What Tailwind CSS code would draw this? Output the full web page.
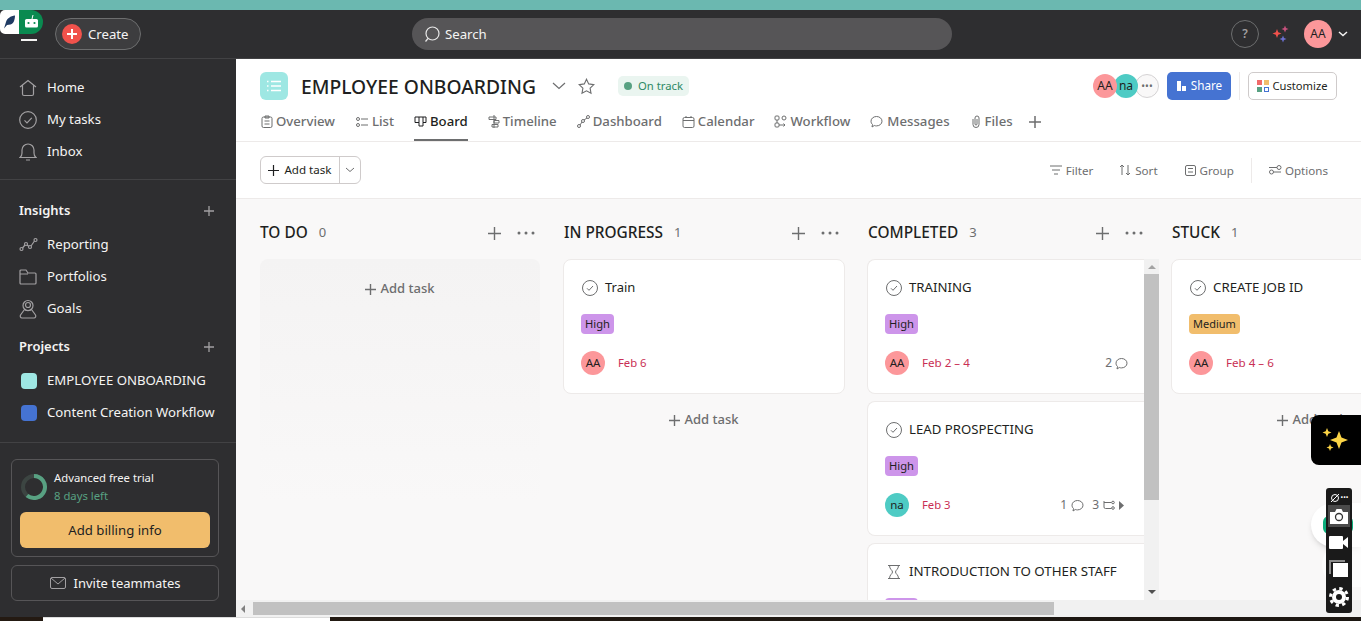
<!DOCTYPE html>
<html lang="en">
  <head>
    <meta charset="UTF-8" />
    <meta name="viewport" content="width=device-width, initial-scale=1.0" />
    <title>EMPLOYEE ONBOARDING - Board</title>
    <script src="https://cdn.jsdelivr.net/npm/@tailwindcss/browser@4"></script>
  </head>
  <body class="h-screen overflow-hidden bg-[#2e2e30] font-['Noto_Sans',sans-serif] text-[13px] text-[#1e1f21]">
    <div class="relative flex h-[621px] w-[1361px] flex-col overflow-hidden">
      <!-- Browser strip -->
      <div class="h-[10px] shrink-0 bg-[#6bb8b0]"></div>

      <!-- Top bar -->
      <header class="flex h-[49px] shrink-0 items-center border-b border-[#424244] bg-[#2e2e30] pl-[21px] pr-[12px]">
        <div class="mb-[17px] h-[2px] w-[16px] self-end bg-[#f5f4f3]"></div>
        <button class="ml-[18px] flex h-[32px] w-[86px] items-center gap-[6px] rounded-full border border-[#6d6e6f] bg-[#3d3d3f] pl-[6px] text-[13.2px] text-[#f5f4f3]">
          <span class="flex h-[20px] w-[20px] items-center justify-center rounded-full bg-[#f1524c]">
            <svg width="12" height="12" viewBox="0 0 12 12"><path d="M6 1v10M1 6h10" stroke="#fff" stroke-width="2" /></svg>
          </span>
          <span class="mt-[2px]">Create</span>
        </button>
        <div class="ml-[271px] flex h-[32px] w-[540px] items-center gap-[4px] rounded-full bg-[#565557] pl-[11px] text-[13.2px] text-[#f5f4f3]">
          <svg width="18" height="18" viewBox="0 0 18 18" fill="none" stroke="#e8e8e8" stroke-width="1.2"><circle cx="9.500" cy="8.500" r="6.500" /><path d="M5 13.500l-2.500 3" /></svg>
          <span class="mt-[2px]">Search</span>
        </div>
        <div class="ml-auto flex items-center">
          <span class="flex h-[28px] w-[28px] items-center justify-center rounded-full border border-[#6d6e6f] text-[12px] font-semibold text-[#a2a0a2]">?</span>
          <svg class="ml-[13px]" width="18" height="18" viewBox="0 0 18 18"><path d="M5 4l1.200 3.300 3.300 1.200-3.300 1.200L5 13 3.800 9.700.5 8.500l3.300-1.200z" fill="#f1524c" /><path d="M13 .5l1 2.500 2.500 1-2.500 1-1 2.500-1-2.500-2.500-1 2.500-1z" fill="#c9527e" /><path d="M11 10.500l1 2.500 2.500 1-2.500 1-1 2.500-1-2.500-2.500-1 2.500-1z" fill="#6a6fd0" /></svg>
          <span class="ml-[14px] flex h-[28px] w-[28px] items-center justify-center rounded-full bg-[#fc979a] text-[12px]">AA</span>
          <svg class="ml-[5px]" width="12" height="8" viewBox="0 0 12 8" fill="none" stroke="#f5f4f3" stroke-width="1.500"><path d="M2 2l4 3.500L10 2" /></svg>
        </div>
      </header>

      <div class="flex min-h-0 flex-1">
        <!-- Sidebar -->
        <aside class="flex w-[236px] shrink-0 flex-col bg-[#2e2e30] text-[13.2px] text-[#f5f4f3]">
          <nav class="flex h-[121px] shrink-0 flex-col border-b border-[#424244] px-[19px] pt-[13px]">
            <a class="flex h-[32px] shrink-0 items-center gap-[10px]">
              <svg class="shrink-0" width="18" height="18" viewBox="0 0 18 18" fill="none" stroke="#a2a0a2" stroke-width="1.200"><path d="M1 8l8-6.500L17 8M3.500 6.500V15a1.500 1.500 0 0 0 1.500 1.500h8a1.500 1.500 0 0 0 1.500-1.500V6.500" /></svg>
              Home
            </a>
            <a class="flex h-[32px] shrink-0 items-center gap-[10px]">
              <svg class="shrink-0" width="18" height="18" viewBox="0 0 18 18" fill="none" stroke="#a2a0a2" stroke-width="1.200"><circle cx="9" cy="9" r="8.300" /><path d="M5.500 9.300l2.500 2.500 4.800-5" /></svg>
              My tasks
            </a>
            <a class="flex h-[32px] shrink-0 items-center gap-[10px]">
              <svg class="shrink-0" width="18" height="18" viewBox="0 0 18 18" fill="none" stroke="#a2a0a2" stroke-width="1.200"><path d="M1 14.500h16c-1.500-1-2-2.500-2-4.500V7A6 6 0 0 0 3 7v3c0 2-.5 3.500-2 4.500zM7 17h4" /></svg>
              Inbox
            </a>
          </nav>

          <div class="flex h-[154px] shrink-0 flex-col px-[19px] pt-[19px]">
            <div class="flex h-[24px] shrink-0 items-center justify-between text-[13px] font-semibold">
              Insights
              <svg width="12" height="12" viewBox="0 0 12 12" class="mr-[2px]"><path d="M6 1v10M1 6h10" stroke="#a2a0a2" stroke-width="1.300" /></svg>
            </div>
            <a class="mt-[6px] flex h-[32px] shrink-0 items-center gap-[9px]">
              <svg class="shrink-0" width="19" height="18" viewBox="0 0 19 18" fill="none" stroke="#a2a0a2" stroke-width="1.200"><circle cx="2.500" cy="13" r="1.500" /><circle cx="7" cy="8" r="1.500" /><circle cx="11" cy="11" r="1.500" /><circle cx="16.500" cy="4" r="1.500" /><path d="M3.500 12l2.500-3M8 9l2 1.500M12 10l3.500-5" /></svg>
              Reporting
            </a>
            <a class="flex h-[32px] shrink-0 items-center gap-[10px]">
              <svg class="shrink-0" width="18" height="16" viewBox="0 0 18 16" fill="none" stroke="#a2a0a2" stroke-width="1.200"><path d="M1 14V2a1 1 0 0 1 1-1h5l2 3h7a1 1 0 0 1 1 1v9a1 1 0 0 1-1 1H2a1 1 0 0 1-1-1zM1 5h8" /></svg>
              Portfolios
            </a>
            <a class="flex h-[32px] shrink-0 items-center gap-[10px]">
              <svg class="shrink-0" width="18" height="20" viewBox="0 0 18 20" fill="none" stroke="#a2a0a2" stroke-width="1.200"><circle cx="9" cy="6.500" r="5" /><circle cx="9" cy="6" r="2.500" /><path d="M5.500 10.500L1.500 16a2 2 0 0 0 1.500 3h12a2 2 0 0 0 1.500-3l-4-5.500c-1 1.500-6 1.500-7 0z" /></svg>
              Goals
            </a>
          </div>

          <div class="flex h-[109px] shrink-0 flex-col border-b border-[#424244] px-[19px] pt-[1px]">
            <div class="flex h-[24px] shrink-0 items-center justify-between text-[13px] font-semibold">
              Projects
              <svg width="12" height="12" viewBox="0 0 12 12" class="mr-[2px]"><path d="M6 1v10M1 6h10" stroke="#a2a0a2" stroke-width="1.300" /></svg>
            </div>
            <a class="mt-[6px] flex h-[32px] shrink-0 items-center gap-[10px] whitespace-nowrap">
              <span class="ml-[2px] h-[16px] w-[16px] shrink-0 rounded-[4px] bg-[#9ee7e3]"></span>
              EMPLOYEE ONBOARDING
            </a>
            <a class="flex h-[32px] shrink-0 items-center gap-[10px] whitespace-nowrap">
              <span class="ml-[2px] h-[16px] w-[16px] shrink-0 rounded-[4px] bg-[#4573d2]"></span>
              Content Creation Workflow
            </a>
          </div>

          <div class="flex flex-col gap-[8px] pl-[11px] pr-[17px] pt-[16px]">
            <div class="flex h-[98px] shrink-0 flex-col rounded-[6px] border border-[#565557] px-[8px] pt-[9px]">
              <div class="flex items-center gap-[6px]">
                <svg width="28" height="28" viewBox="0 0 28 28" fill="none" stroke-width="4"><circle cx="14" cy="14" r="11" stroke="#3c4542" /><path d="M14 3a11 11 0 1 1-7 19.500" stroke="#58a182" /></svg>
                <div class="flex flex-col text-[11.3px] leading-[18px]">
                  <span class="text-[#f5f4f3]">Advanced free trial</span>
                  <span class="text-[#58a182]">8 days left</span>
                </div>
              </div>
              <button class="mt-[7px] h-[36px] shrink-0 rounded-[6px] bg-[#f1bd6c] pt-[2px] text-[13.2px] text-[#1e1f21]">Add billing info</button>
            </div>
            <button class="flex h-[36px] shrink-0 items-center justify-center gap-[8px] rounded-[6px] border border-[#565557] text-[13px] text-[#f5f4f3]">
              <svg width="16" height="12" viewBox="0 0 16 12" fill="none" stroke="#a2a0a2" stroke-width="1"><rect x="0.500" y="0.500" width="15" height="11" rx="1.500" /><path d="M1 1l7 6 7-6" /></svg>
              <span class="mt-[2px]">Invite teammates</span>
            </button>
          </div>
        </aside>

        <!-- Main -->
        <main class="flex min-w-0 flex-1 flex-col bg-white">
          <!-- Project header -->
          <div class="flex h-[46px] shrink-0 items-center pl-[24px] pr-[24px] pt-[8px]">
            <span class="flex h-[28px] w-[28px] items-center justify-center rounded-[6px] bg-[#9ee7e3]">
              <svg width="16" height="12" viewBox="0 0 16 12" stroke="#fff" stroke-width="1.600"><path d="M5 1.500h10M5 6h10M5 10.500h10M1 1.500h1.500M1 6h1.500M1 10.500h1.500" /></svg>
            </span>
            <h1 class="ml-[13px] mt-[2px] whitespace-nowrap text-[19.3px] font-medium">EMPLOYEE ONBOARDING</h1>
            <svg class="ml-[16px]" width="14" height="8" viewBox="0 0 14 8" fill="none" stroke="#6d6e6f" stroke-width="1.200"><path d="M1 1l6 5.500L13 1" /></svg>
            <svg class="ml-[12px]" width="17" height="17" viewBox="0 0 17 17" fill="none" stroke="#6d6e6f" stroke-width="1.100"><path d="M8.500 1.200l2.200 4.700 5.100.7-3.700 3.600.9 5.100-4.500-2.500L4 15.300l.9-5.100L1.200 6.600l5.100-.7z" /></svg>
            <span class="ml-[23px] flex h-[20px] items-center gap-[6px] rounded-[5px] bg-[#eaf5f0] px-[6px] text-[11.3px] text-[#2f8a66]">
              <span class="h-[8px] w-[8px] rounded-full bg-[#58a182]"></span>
              On track
            </span>
            <div class="ml-auto flex items-center">
              <span class="z-20 flex h-[24px] w-[24px] items-center justify-center rounded-full bg-[#fc979a] text-[12px]">AA</span>
              <span class="z-10 -ml-[3px] flex h-[24px] w-[24px] items-center justify-center rounded-full bg-[#4ecbc4] text-[12px]">na</span>
              <span class="-ml-[3px] flex h-[24px] w-[24px] items-center justify-center rounded-full border border-[#d5d3d4] bg-[#f9f8f8] text-[10px] leading-none text-[#6d6e6f]">•••</span>
              <button class="ml-[8px] flex h-[28px] w-[64px] items-center justify-center gap-[4px] rounded-[5px] bg-[#4573d2] text-[11.7px] text-white">
                <svg width="11" height="11" viewBox="0 0 11 11" fill="#fff"><path d="M1 0h4v10H1zM6 5h4v5H6z" /></svg>
                Share
              </button>
              <span class="ml-[8px] h-[28px] w-[1px] bg-[#edeae9]"></span>
              <button class="ml-[8px] flex h-[28px] w-[89px] items-center justify-center gap-[3px] rounded-[5px] border border-[#cfcbcb] text-[11.2px]">
                <svg width="12" height="12" viewBox="0 0 12 12"><rect width="5" height="5" fill="#f06a6a" /><rect x="7" width="5" height="5" fill="#f1bd6c" /><rect y="7" width="5" height="5" fill="#58a182" /><rect x="7.500" y="7.500" width="4" height="4" fill="none" stroke="#4573d2" /></svg>
                Customize
              </button>
            </div>
          </div>

          <!-- Tabs -->
          <nav class="flex h-[37px] shrink-0 items-stretch gap-[20px] border-b border-[#edeae9] pb-[3px] pl-[25px] text-[13.2px] font-medium text-[#6d6e6f]">
            <a class="flex items-center gap-[3px]">
              <svg width="12" height="13" viewBox="0 0 12 13" fill="none" stroke="#6d6e6f"><rect x="1" y="2" width="10" height="10.500" rx="1.500" /><path d="M4 1h4v2H4zM3.500 6h5M3.500 9h5" /></svg>
              Overview
            </a>
            <a class="ml-[1px] flex items-center gap-[4px]">
              <svg width="12" height="10" viewBox="0 0 12 10" fill="none" stroke="#6d6e6f"><circle cx="2" cy="2" r="1.500" /><circle cx="2" cy="8" r="1.500" /><path d="M5 2h7M5 8h7" /></svg>
              List
            </a>
            <a class="relative flex items-center gap-[3px] text-[#1e1f21]">
              <svg width="13" height="12" viewBox="0 0 13 12" fill="none" stroke="#1e1f21"><path d="M1 1h11v5.500H9V10H5V6.500H1zM5 1v5.500M9 1v5.500" /></svg>
              Board
              <span class="absolute inset-x-0 bottom-[-3px] h-[2px] bg-[#6d6e6f]"></span>
            </a>
            <a class="flex items-center gap-[2px]">
              <svg width="13" height="13" viewBox="0 0 13 13" fill="none" stroke="#6d6e6f"><path d="M6 0v13M1 2h7v2.500H1zM6 5.500h5V8H6zM4 9.500h6V12H4z" /></svg>
              Timeline
            </a>
            <a class="flex items-center gap-[3px]">
              <svg width="13" height="13" viewBox="0 0 13 13" fill="none" stroke="#6d6e6f"><circle cx="2" cy="11" r="1.500" /><circle cx="6" cy="6" r="1.500" /><circle cx="11" cy="2" r="1.500" /><path d="M3 10l2-3M7 5l3-2" /></svg>
              Dashboard
            </a>
            <a class="flex items-center gap-[3px]">
              <svg width="13" height="13" viewBox="0 0 13 13" fill="none" stroke="#6d6e6f"><rect x="1" y="2.500" width="11" height="10" rx="1.500" /><path d="M1 5.500h11M4 1v2M9 1v2" /></svg>
              Calendar
            </a>
            <a class="flex items-center gap-[3px]">
              <svg width="13" height="13" viewBox="0 0 13 13" fill="none" stroke="#6d6e6f"><rect x="1" y="1" width="4" height="4" rx="1" /><circle cx="10" cy="3" r="2" /><rect x="1" y="8" width="4" height="4" rx="1" /><path d="M3 5v3M5 10h6l-1.500-1.500M11 10l-1.500 1.500" /></svg>
              Workflow
            </a>
            <a class="flex items-center gap-[4px]">
              <svg width="13" height="13" viewBox="0 0 13 13" fill="none" stroke="#6d6e6f"><path d="M6.500 1.500c3 0 5.500 2 5.500 4.700s-2.500 4.700-5.500 4.700c-.8 0-1.500-.1-2.200-.4L2 12l.5-2.500C1.500 8.600 1 7.500 1 6.200 1 3.500 3.500 1.500 6.500 1.500z" /></svg>
              Messages
            </a>
            <a class="flex items-center gap-[3px]">
              <svg width="12" height="13" viewBox="0 0 12 13" fill="none" stroke="#6d6e6f"><path d="M3 4v5.500a3 3 0 0 0 6 0V3a2 2 0 0 0-4 0v6a1 1 0 0 0 2 0V4" /></svg>
              Files
            </a>
            <span class="-ml-[5px] flex items-center">
              <svg width="14" height="14" viewBox="0 0 14 14"><path d="M7 1v12M1 7h12" stroke="#6d6e6f" stroke-width="1.500" /></svg>
            </span>
          </nav>

          <!-- Toolbar -->
          <div class="flex h-[57px] shrink-0 items-center border-b border-[#edeae9] pl-[24px] pr-[33px] text-[11.6px] text-[#6d6e6f]">
            <div class="flex h-[28px] items-stretch rounded-[6px] border border-[#cfcbcb] text-[#1e1f21]">
              <button class="flex w-[79px] items-center justify-center gap-[5px] border-r border-[#cfcbcb]">
                <svg width="11" height="11" viewBox="0 0 11 11"><path d="M5.500 0v11M0 5.500h11" stroke="#1e1f21" stroke-width="1.200" /></svg>
                Add task
              </button>
              <button class="flex w-[20px] items-center justify-center">
                <svg width="10" height="6" viewBox="0 0 10 6" fill="none" stroke="#6d6e6f"><path d="M1 1l4 3.500L9 1" /></svg>
              </button>
            </div>
            <div class="ml-auto flex items-center pt-[1px]">
              <span class="flex items-center gap-[4px]">
                <svg width="12" height="10" viewBox="0 0 12 10" stroke="#6d6e6f"><path d="M0 1h12M2 5h8M4 9h4" /></svg>
                Filter
              </span>
              <span class="ml-[26px] flex items-center gap-[4px]">
                <svg width="12" height="12" viewBox="0 0 12 12" fill="none" stroke="#6d6e6f"><path d="M3 11V1L1 3M3 1l2 2M9 1v10l-2-2M9 11l2-2" /></svg>
                Sort
              </span>
              <span class="ml-[27px] flex items-center gap-[4px]">
                <svg width="11" height="11" viewBox="0 0 11 11" fill="none" stroke="#6d6e6f"><rect x="0.500" y="0.500" width="10" height="10" rx="1.500" /><path d="M3 3.500h5M3 7h5" /></svg>
                Group
              </span>
              <span class="ml-[17px] h-[25px] w-[1px] bg-[#edeae9]"></span>
              <span class="ml-[17px] flex items-center gap-[3px]">
                <svg width="13" height="10" viewBox="0 0 13 10" fill="none" stroke="#6d6e6f"><circle cx="2.500" cy="7" r="2" /><circle cx="10" cy="2.500" r="2" /><path d="M4.500 7H12M0 2.500h8" /></svg>
                Options
              </span>
            </div>
          </div>

          <!-- Board -->
          <div class="flex min-h-0 flex-1 gap-[24px] overflow-hidden bg-[#f9f8f8] pl-[24px]">
            <!-- TO DO -->
            <section class="flex w-[280px] shrink-0 flex-col">
              <div class="flex h-[60px] shrink-0 items-center pt-[8px]">
                <h2 class="text-[15.4px] font-medium">TO DO</h2>
                <span class="ml-[11px] text-[13px] text-[#6d6e6f]">0</span>
                <span class="ml-auto flex items-center gap-[16px] pr-[5px]">
                  <svg width="13" height="13" viewBox="0 0 13 13"><path d="M6.500 0v13M0 6.500h13" stroke="#6d6e6f" stroke-width="1.400" /></svg>
                  <svg width="18" height="4" viewBox="0 0 18 4" fill="#6d6e6f"><circle cx="2" cy="2" r="1.500" /><circle cx="9" cy="2" r="1.500" /><circle cx="16" cy="2" r="1.500" /></svg>
                </span>
              </div>
              <div class="flex h-[242px] justify-center rounded-t-[8px] bg-gradient-to-b from-[#f4f3f3] to-[#f9f8f8] pt-[20px] text-[13px] font-medium text-[#6d6e6f]">
                <span class="flex h-[20px] items-center gap-[4px]">
                  <svg width="11" height="11" viewBox="0 0 11 11"><path d="M5.500 0v11M0 5.500h11" stroke="#6d6e6f" stroke-width="1.400" /></svg>
                  Add task
                </span>
              </div>
            </section>

            <!-- IN PROGRESS -->
            <section class="flex w-[280px] shrink-0 flex-col">
              <div class="flex h-[60px] shrink-0 items-center pt-[8px]">
                <h2 class="text-[15.4px] font-medium">IN PROGRESS</h2>
                <span class="ml-[11px] text-[13px] text-[#6d6e6f]">1</span>
                <span class="ml-auto flex items-center gap-[16px] pr-[5px]">
                  <svg width="13" height="13" viewBox="0 0 13 13"><path d="M6.500 0v13M0 6.500h13" stroke="#6d6e6f" stroke-width="1.400" /></svg>
                  <svg width="18" height="4" viewBox="0 0 18 4" fill="#6d6e6f"><circle cx="2" cy="2" r="1.500" /><circle cx="9" cy="2" r="1.500" /><circle cx="16" cy="2" r="1.500" /></svg>
                </span>
              </div>
              <article class="-ml-[1px] flex h-[135px] w-[282px] shrink-0 flex-col rounded-[8px] border border-[#edeae9] bg-white pl-[17px] pr-[16px] pt-[18px]">
                <div class="flex h-[20px] items-center gap-[7px] text-[13px]">
                  <svg class="ml-[1px]" width="16" height="16" viewBox="0 0 16 16" fill="none" stroke="#6d6e6f"><circle cx="8" cy="8" r="7.500" /><path d="M5 8.300l2 2 4-4.300" /></svg>
                  Train
                </div>
                <span class="mt-[16px] flex h-[20px] w-fit items-center rounded-[4px] bg-[#cd95ea] px-[4px] text-[11.2px]">High</span>
                <div class="mt-[17px] flex items-center text-[11.3px] text-[#c92f54]">
                  <span class="flex h-[24px] w-[24px] items-center justify-center rounded-full bg-[#fc979a] text-[11.5px] text-[#1e1f21]">AA</span>
                  <span class="ml-[13px]">Feb 6</span>
                </div>
              </article>
              <div class="mt-[16px] flex h-[20px] items-center justify-center gap-[4px] text-[13px] font-medium text-[#6d6e6f]">
                <svg width="11" height="11" viewBox="0 0 11 11"><path d="M5.500 0v11M0 5.500h11" stroke="#6d6e6f" stroke-width="1.400" /></svg>
                Add task
              </div>
            </section>

            <!-- COMPLETED -->
            <section class="flex w-[280px] shrink-0 flex-col">
              <div class="flex h-[60px] shrink-0 items-center pt-[8px]">
                <h2 class="text-[15.4px] font-medium">COMPLETED</h2>
                <span class="ml-[11px] text-[13px] text-[#6d6e6f]">3</span>
                <span class="ml-auto flex items-center gap-[16px] pr-[5px]">
                  <svg width="13" height="13" viewBox="0 0 13 13"><path d="M6.500 0v13M0 6.500h13" stroke="#6d6e6f" stroke-width="1.400" /></svg>
                  <svg width="18" height="4" viewBox="0 0 18 4" fill="#6d6e6f"><circle cx="2" cy="2" r="1.500" /><circle cx="9" cy="2" r="1.500" /><circle cx="16" cy="2" r="1.500" /></svg>
                </span>
              </div>
              <div class="-ml-[1px] flex min-h-0 flex-1">
                <div class="flex w-[277px] shrink-0 flex-col gap-[7px] overflow-hidden">
                  <article class="flex h-[135px] shrink-0 flex-col rounded-l-[8px] border border-r-0 border-[#edeae9] bg-white pl-[17px] pr-[16px] pt-[18px]">
                    <div class="flex h-[20px] items-center gap-[7px] text-[13.2px]">
                      <svg class="ml-[1px]" width="16" height="16" viewBox="0 0 16 16" fill="none" stroke="#6d6e6f"><circle cx="8" cy="8" r="7.500" /><path d="M5 8.300l2 2 4-4.300" /></svg>
                      TRAINING
                    </div>
                    <span class="mt-[16px] flex h-[20px] w-fit items-center rounded-[4px] bg-[#cd95ea] px-[4px] text-[11.2px]">High</span>
                    <div class="mt-[17px] flex items-center text-[11.6px] text-[#c92f54]">
                      <span class="flex h-[24px] w-[24px] items-center justify-center rounded-full bg-[#fc979a] text-[11.5px] text-[#1e1f21]">AA</span>
                      <span class="ml-[13px]">Feb 2 – 4</span>
                      <span class="ml-auto flex items-center gap-[3px] text-[12px] text-[#6d6e6f]">
                        2
                        <svg width="13" height="13" viewBox="0 0 13 13" fill="none" stroke="#6d6e6f"><path d="M6.500 1.500c3 0 5.500 2 5.500 4.700s-2.500 4.700-5.500 4.700c-.8 0-1.500-.1-2.200-.4L2 12l.5-2.500C1.500 8.600 1 7.500 1 6.200 1 3.500 3.500 1.500 6.500 1.500z" /></svg>
                      </span>
                    </div>
                  </article>
                  <article class="flex h-[135px] shrink-0 flex-col rounded-l-[8px] border border-r-0 border-[#edeae9] bg-white pl-[17px] pr-[16px] pt-[18px]">
                    <div class="flex h-[20px] items-center gap-[7px] text-[13.2px]">
                      <svg class="ml-[1px]" width="16" height="16" viewBox="0 0 16 16" fill="none" stroke="#6d6e6f"><circle cx="8" cy="8" r="7.500" /><path d="M5 8.300l2 2 4-4.300" /></svg>
                      LEAD PROSPECTING
                    </div>
                    <span class="mt-[16px] flex h-[20px] w-fit items-center rounded-[4px] bg-[#cd95ea] px-[4px] text-[11.2px]">High</span>
                    <div class="mt-[17px] flex items-center text-[11.3px] text-[#c92f54]">
                      <span class="flex h-[24px] w-[24px] items-center justify-center rounded-full bg-[#4ecbc4] text-[11.5px] text-[#1e1f21]">na</span>
                      <span class="ml-[13px]">Feb 3</span>
                      <span class="ml-auto mr-[4px] flex items-center gap-[4px] text-[12px] text-[#6d6e6f]">
                        1
                        <svg width="13" height="13" viewBox="0 0 13 13" fill="none" stroke="#6d6e6f"><path d="M6.500 1.500c3 0 5.500 2 5.500 4.700s-2.500 4.700-5.500 4.700c-.8 0-1.500-.1-2.200-.4L2 12l.5-2.500C1.500 8.600 1 7.500 1 6.200 1 3.500 3.500 1.500 6.500 1.500z" /></svg>
                        <span class="ml-[4px]">3</span>
                        <svg width="12" height="10" viewBox="0 0 12 10" fill="none" stroke="#6d6e6f"><path d="M1 1v6a1.500 1.500 0 0 0 1.500 1.500H8.500M1 2.500h7.500" /><circle cx="10" cy="2.500" r="1.300" /><circle cx="10" cy="8" r="1.300" /></svg>
                        <svg width="5" height="9" viewBox="0 0 5 9" fill="#6d6e6f"><path d="M0 0l5 4.500L0 9z" /></svg>
                      </span>
                    </div>
                  </article>
                  <article class="flex h-[135px] shrink-0 flex-col rounded-l-[8px] border border-r-0 border-[#edeae9] bg-white pl-[17px] pr-[16px] pt-[18px]">
                    <div class="flex h-[20px] items-center gap-[7px] whitespace-nowrap text-[13.3px]">
                      <svg class="ml-[1px]" width="16" height="16" viewBox="0 0 16 16" fill="none" stroke="#6d6e6f"><path d="M2 1.500h12M2 14.500h12M3.500 1.500c0 4 3 4.500 3 6.500s-3 2.500-3 6.500M12.500 1.500c0 4-3 4.500-3 6.500s3 2.500 3 6.500" /></svg>
                      INTRODUCTION TO OTHER STAFF
                    </div>
                    <span class="mt-[16px] flex h-[20px] w-fit items-center rounded-[4px] bg-[#cd95ea] px-[4px] text-[11.2px]">High</span>
                  </article>
                </div>
                <!-- Column scrollbar -->
                <div class="relative w-[15px] shrink-0 bg-[#f1f1f1]">
                  <span class="absolute left-[4px] top-[6px] h-0 w-0 border-x-[4px] border-b-[4px] border-x-transparent border-b-[#a3a3a3]"></span>
                  <span class="absolute inset-x-[0px] top-[15px] h-[226px] bg-[#c1c1c1]"></span>
                  <span class="absolute bottom-[6px] left-[4px] h-0 w-0 border-x-[4px] border-t-[4px] border-x-transparent border-t-[#505050]"></span>
                </div>
              </div>
            </section>

            <!-- STUCK -->
            <section class="flex w-[280px] shrink-0 flex-col">
              <div class="flex h-[60px] shrink-0 items-center pt-[8px]">
                <h2 class="text-[15.4px] font-medium">STUCK</h2>
                <span class="ml-[11px] text-[13px] text-[#6d6e6f]">1</span>
              </div>
              <article class="-ml-[1px] flex h-[135px] w-[282px] shrink-0 flex-col rounded-[8px] border border-[#edeae9] bg-white pl-[17px] pr-[16px] pt-[18px]">
                <div class="flex h-[20px] items-center gap-[7px] text-[13.3px]">
                  <svg class="ml-[1px]" width="16" height="16" viewBox="0 0 16 16" fill="none" stroke="#6d6e6f"><circle cx="8" cy="8" r="7.500" /><path d="M5 8.300l2 2 4-4.300" /></svg>
                  CREATE JOB ID
                </div>
                <span class="mt-[16px] flex h-[20px] w-fit items-center rounded-[4px] bg-[#f1bd6c] px-[4px] text-[11px]">Medium</span>
                <div class="mt-[17px] flex items-center text-[11.6px] text-[#c92f54]">
                  <span class="flex h-[24px] w-[24px] items-center justify-center rounded-full bg-[#fc979a] text-[11.5px] text-[#1e1f21]">AA</span>
                  <span class="ml-[13px]">Feb 4 – 6</span>
                </div>
              </article>
              <div class="mt-[16px] flex h-[20px] items-center justify-center gap-[4px] text-[13px] font-medium text-[#6d6e6f]">
                <svg width="11" height="11" viewBox="0 0 11 11"><path d="M5.500 0v11M0 5.500h11" stroke="#6d6e6f" stroke-width="1.400" /></svg>
                Add task
              </div>
            </section>
          </div>

          <!-- Horizontal scrollbar -->
          <div class="flex h-[17px] shrink-0 items-center bg-[#f1f1f1]">
            <span class="ml-[5px] h-0 w-0 border-y-[4px] border-r-[4px] border-y-transparent border-r-[#808080]"></span>
            <span class="ml-[8px] h-[13px] w-[801px] bg-[#c1c1c1]"></span>
          </div>
        </main>
      </div>

      <!-- Desktop strip below the window -->
      <div class="flex h-[4px] shrink-0 bg-gradient-to-r from-[#241a12] to-[#1c1712]">
        <span class="ml-[43px] w-[287px] border-t border-[#dcdcdc] bg-white"></span>
      </div>

      <!-- Browser extension overlays -->
      <div class="absolute left-0 top-[10px] flex h-[24px] items-stretch overflow-hidden rounded-l-[5px] rounded-r-[12px]">
        <span class="flex w-[19px] items-center justify-center bg-white">
          <svg width="13" height="14" viewBox="0 0 13 14"><path d="M1 13.500L3 7c1-3.500 4.500-6 9-6.500 0 3.500-1 8-4.500 9l-3.500.5z" fill="#1f3a63" /></svg>
        </span>
        <span class="flex w-[24px] items-center justify-center bg-[#0a8a50]">
          <svg width="15" height="14" viewBox="0 0 15 14"><path d="M9 0L8 4" stroke="#fff" /><rect x="1" y="4" width="13" height="8.500" rx="1.500" fill="#fff" /><circle cx="4.500" cy="8" r="1.100" fill="#0a8a50" /><circle cx="10.500" cy="8" r="1.100" fill="#0a8a50" /></svg>
        </span>
      </div>
      <div class="absolute left-[1311px] top-[415px] flex h-[50px] w-[50px] items-center rounded-l-[8px] bg-black pl-[11px]">
        <svg width="28" height="28" viewBox="0 0 28 28" fill="#fbd446"><path d="M17 5l2.500 6.500L26 14l-6.500 2.500L17 23l-2.500-6.500L8 14l6.500-2.500z" /><path d="M5 2l1.300 3.200L9.500 6.500 6.300 7.800 5 11 3.700 7.800.5 6.500l3.200-1.300zM8 18l1 2.500 2.500 1-2.500 1L8 25l-1-2.500-2.500-1 2.500-1z" /></svg>
      </div>
      <div class="absolute left-[1311px] top-[503px] flex h-[44px] w-[50px] items-center rounded-l-full bg-white pl-[12px] shadow-md">
        <span class="h-[18px] w-[30px] rounded-[6px] border-[4px] border-[#0cae7c]"></span>
      </div>
      <div class="absolute left-[1322px] top-[543px] h-[44px] w-[39px] rounded-l-full bg-white/70"></div>
      <div class="absolute left-[1326px] top-[488px] flex h-[125px] w-[26px] flex-col items-center rounded-[3px] bg-[#1a1a1a] pt-[2px]">
        <div class="flex h-[15px] items-center gap-[1px]">
          <svg width="10" height="10" viewBox="0 0 10 10" fill="none" stroke="#fff"><circle cx="5" cy="5" r="3.500" /><path d="M1 9l8-8" /></svg>
          <span class="text-[7px] leading-none text-white">•••</span>
        </div>
        <span class="flex h-[22px] w-[22px] shrink-0 items-center justify-center bg-[#4a4a4a]">
          <svg width="18" height="15" viewBox="0 0 18 15"><path d="M0 3h5l1.500-3h5L13 3h5v12H0z" fill="#fff" /><circle cx="9" cy="8" r="3.500" fill="#fff" stroke="#333" stroke-width="1.300" /></svg>
        </span>
        <svg class="mt-[9px] shrink-0" width="20" height="13" viewBox="0 0 20 13" fill="#fff"><rect width="14" height="13" rx="1" /><path d="M14 5l5-4v11l-5-4z" /></svg>
        <svg class="mt-[11px] shrink-0" width="20" height="18" viewBox="0 0 20 18"><path d="M0 0h16v2H2v12H0z" fill="#8a8a8a" /><rect x="4" y="3" width="15" height="14" fill="#fff" /></svg>
        <svg class="mt-[9px] shrink-0" width="20" height="20" viewBox="0 0 20 20"><circle cx="10" cy="10" r="8.500" fill="none" stroke="#fff" stroke-width="3" stroke-dasharray="3.340 3.340" /><circle cx="10" cy="10" r="7" fill="#fff" /><circle cx="10" cy="10" r="3" fill="#1a1a1a" /></svg>
      </div>
    </div>
  </body>
</html>
